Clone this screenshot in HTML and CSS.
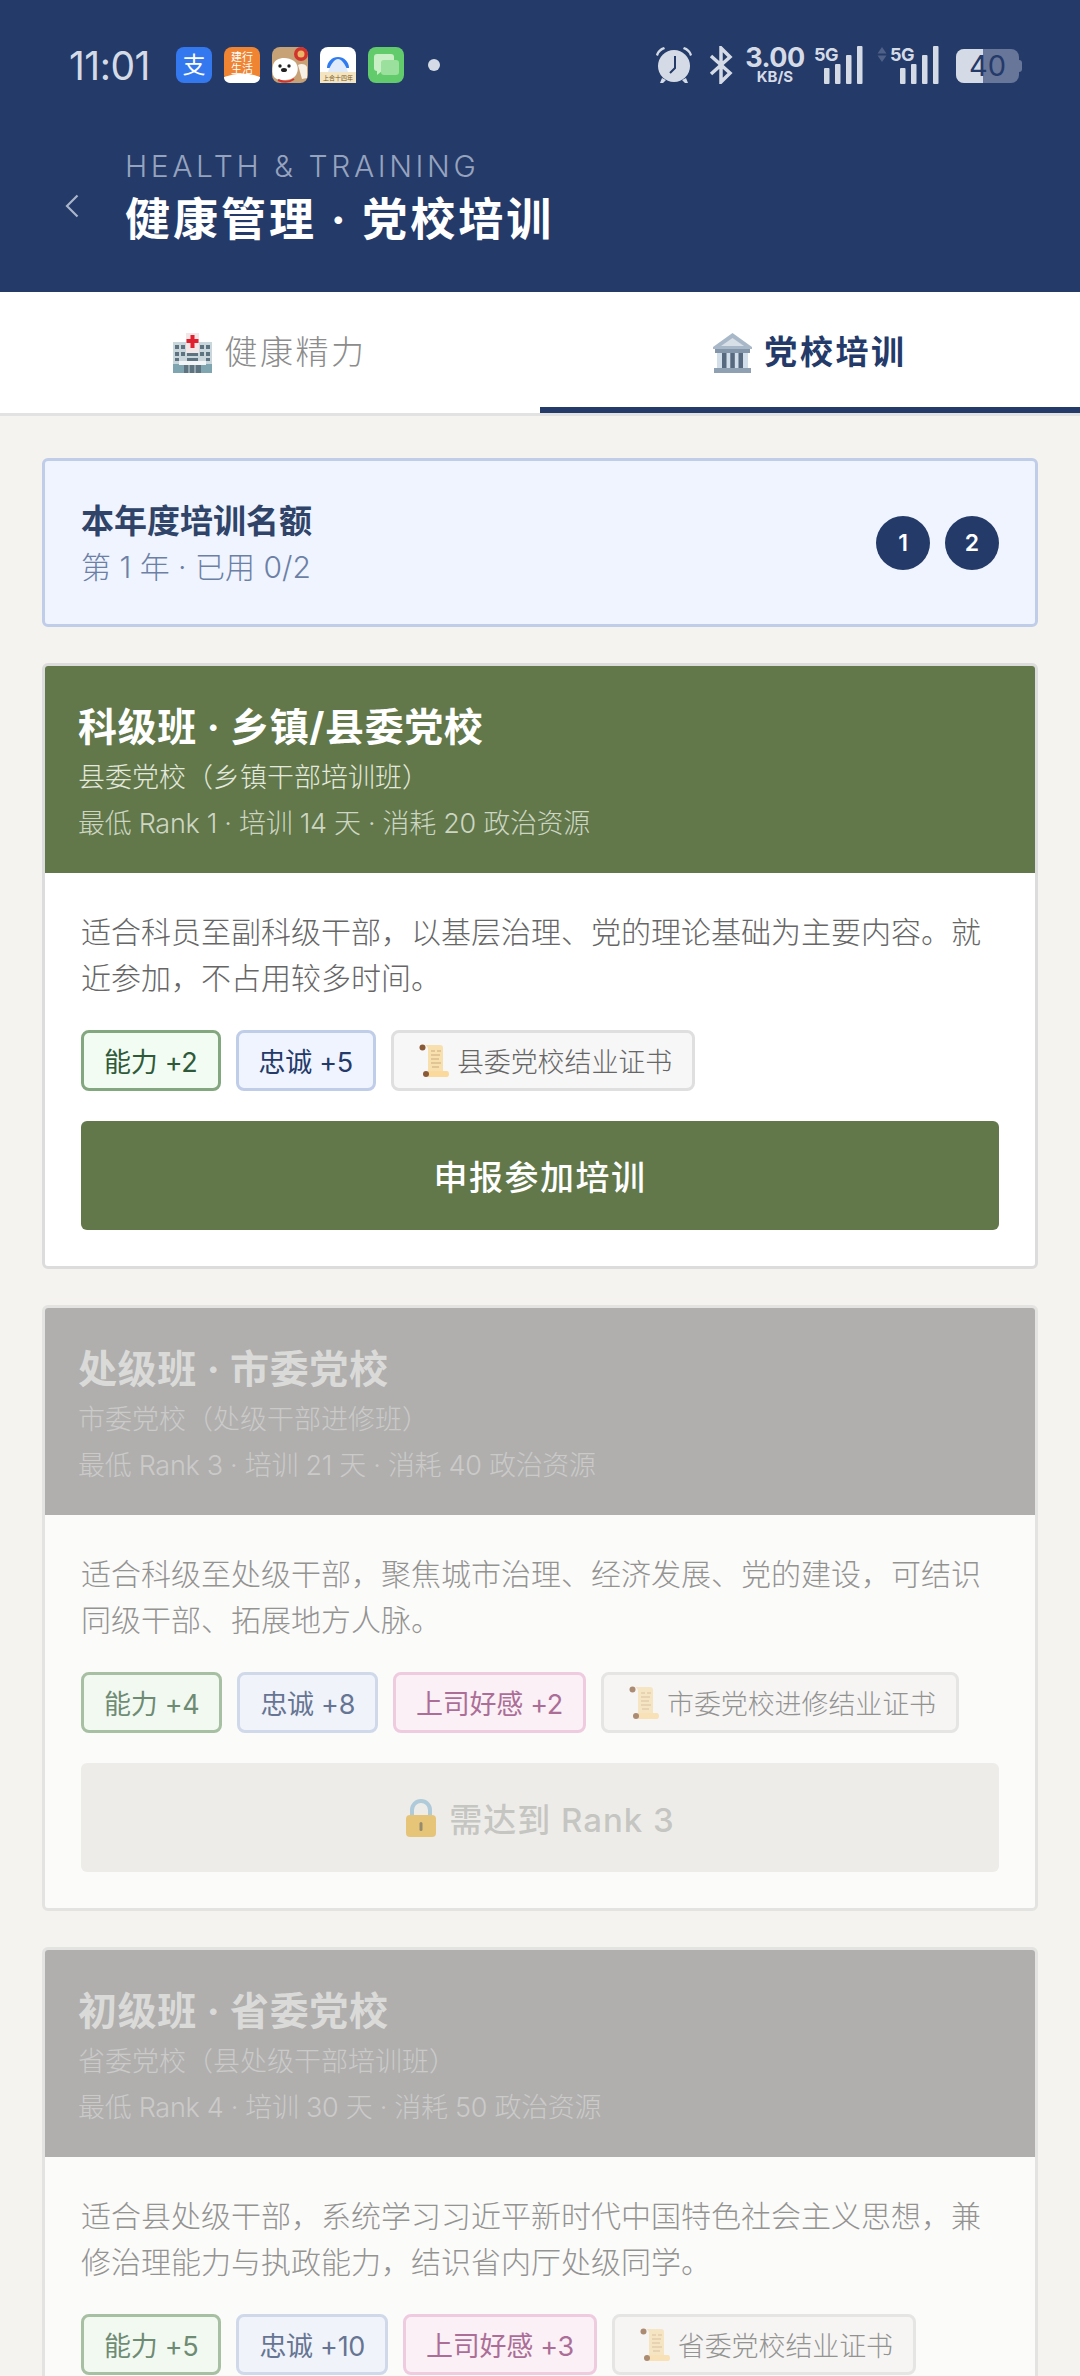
FILE: index.html
```html
<!DOCTYPE html>
<html lang="zh-CN">
<head>
<meta charset="utf-8">
<title>健康管理 · 党校培训</title>
<link rel="stylesheet" href="styles.css">
</head>
<body>
<svg class="defs" width="0" height="0" aria-hidden="true">
  <defs>
    <symbol id="i-scroll" viewBox="0 0 30 34">
      <path d="M5 1h16c2 0 3 1 3 3v23H9V5C9 3 7 1 5 1z" fill="#f8dfae"/>
      <path d="M9 27h19c1 0 2 1 2 3s-1 3-2 3H9z" fill="#fbd99c"/>
      <g stroke="#c9ac7c" stroke-width="1.2">
        <path d="M12 7h4M18 7h4M12 11h9M12 15h8M12 19h10M13 23h7"/>
      </g>
      <circle cx="3.500" cy="3.500" r="3" fill="#8a5a36"/>
      <circle cx="7" cy="30" r="3" fill="#8a5a36"/>
    </symbol>
    <symbol id="i-signal" viewBox="0 0 50 38">
      <rect x="10" y="22" width="5.5" height="16" rx="1" fill="#d5dbe6"/>
      <rect x="21" y="18" width="5.5" height="20" rx="1" fill="#d5dbe6"/>
      <rect x="32" y="9" width="5.5" height="29" rx="1" fill="#d5dbe6"/>
      <rect x="43" y="0" width="5.5" height="38" rx="1" fill="#d5dbe6"/>
    </symbol>
  </defs>
</svg>

<header class="app-header">
  <div class="status">
    <div class="status-left">
      <span class="clock">11:01</span>
      <div class="apps">
        <svg class="app" viewBox="0 0 36 36"><rect width="36" height="36" rx="8" fill="#3478f0"/><text class="app-txt" x="18" y="26" font-size="23">支</text></svg>
        <svg class="app" viewBox="0 0 36 36"><rect width="36" height="36" rx="8" fill="#ef8433"/><path d="M0 30q18-7 36 0c0 4-3 6-8 6H8c-5 0-8-2-8-6z" fill="#fff"/><text class="app-txt" x="18" y="14" font-size="11">建行</text><text class="app-txt" x="18" y="26" font-size="11">生活</text></svg>
        <svg class="app" viewBox="0 0 36 36"><rect width="36" height="36" rx="8" fill="#c8a277"/><circle cx="29" cy="7" r="7" fill="#d2332c"/><circle cx="29" cy="7" r="3.500" fill="#e9b668"/><path d="M1 18c2-8 14-9 21-4 4 3 5 9 2 14-4 6-17 7-22 2-2-3-2-8-1-12z" fill="#fff"/><path d="M26 18c3-2 8-1 9 2v11l-5 1z" fill="#f6f0e6"/><circle cx="8" cy="19" r="1.700" fill="#222"/><circle cx="17" cy="19" r="1.700" fill="#222"/><ellipse cx="12" cy="23" rx="3" ry="2" fill="#222"/><path d="M6 33q9 4 16-1" stroke="#d2332c" stroke-width="2" fill="none"/></svg>
        <svg class="app" viewBox="0 0 36 36"><rect width="36" height="36" rx="8" fill="#fff"/><rect y="25" width="36" height="11" fill="#f3e4c2"/><path d="M7 21a11 11 0 1 1 22 0h-5a6 6 0 0 0-12 0z" fill="#2f7bf0"/><path d="M8 25c3-9 7-13 10-13s7 4 10 13z" fill="#dfeafb"/><text class="app-mini" x="18" y="33" font-size="6">上合十四年</text></svg>
        <svg class="app" viewBox="0 0 36 36"><rect width="36" height="36" rx="8" fill="#62cc6c"/><rect x="6" y="7" width="20" height="17" rx="3" fill="#c9efc6"/><path d="M9 24h5l-5 4z" fill="#c9efc6"/><rect x="13" y="13" width="18" height="15" rx="3" fill="#9be09c"/></svg>
      </div>
      <span class="status-dot"></span>
    </div>
    <div class="status-right">
      <svg class="alarm" viewBox="0 0 38 38"><path d="M1 9c1-4 4-7 8-8l1 2c-3 1-6 3-7 7zM37 9c-1-4-4-7-8-8l-1 2c3 1 6 3 7 7z" fill="#d5dbe6"/><circle cx="19" cy="20" r="16" fill="#d5dbe6"/><path d="M7 32l-2 5h3l3-3zM31 32l2 5h-3l-3-3z" fill="#d5dbe6"/><path d="M20 10v12l-5 5" fill="none" stroke="#243a69" stroke-width="2"/></svg>
      <svg class="bt" viewBox="0 0 24 38"><path d="M2 10l19 17-9 9V2l9 9L2 28" fill="none" stroke="#d5dbe6" stroke-width="3.500"/></svg>
      <div class="speed"><span class="speed-num">3.00</span><span class="speed-unit">KB/S</span></div>
      <div class="net">
        <span class="net-label">5G</span>
        <svg class="signal"><use href="#i-signal"/></svg>
      </div>
      <div class="net net-second">
        <svg class="updown" viewBox="0 0 10 15"><path d="M5 0l4.500 6.500h-9zM5 15L.5 8.500h9z" fill="#4f6187"/></svg>
        <span class="net-label">5G</span>
        <svg class="signal"><use href="#i-signal"/></svg>
      </div>
      <div class="battery"><span class="battery-fill"></span><span class="battery-num">40</span></div>
    </div>
  </div>
  <div class="nav">
    <svg class="back" viewBox="0 0 14 24"><path d="M12.500 1.500L2 12l10.500 10.500" fill="none" stroke="#aab5ca" stroke-width="2.200"/></svg>
    <div class="nav-text">
      <div class="eyebrow">HEALTH &amp; TRAINING</div>
      <h1 class="page-title">健康管理 · 党校培训</h1>
    </div>
  </div>
</header>

<nav class="tabs">
  <div class="tab">
    <svg class="tab-icon" viewBox="0 0 39 40">
      <rect x="0" y="9" width="39" height="31" fill="#c9d6db"/>
      <rect x="13" y="0" width="13" height="20" fill="#f3e6e6"/>
      <path d="M17.500 2h4v4h4v4h-4v5h-4v-5h-4V6h4z" fill="#e0202e"/>
      <g fill="#5d7480">
        <rect x="2" y="12" width="4" height="4"/><rect x="8" y="12" width="4" height="4"/><rect x="27" y="12" width="4" height="4"/><rect x="33" y="12" width="4" height="4"/>
        <rect x="2" y="19" width="4" height="4"/><rect x="8" y="19" width="4" height="4"/><rect x="27" y="19" width="4" height="4"/><rect x="33" y="19" width="4" height="4"/>
        <rect x="14" y="20" width="11" height="3"/><rect x="14" y="25" width="11" height="3"/>
        <rect x="2" y="25" width="4" height="3"/><rect x="33" y="25" width="4" height="3"/>
      </g>
      <rect x="0" y="31" width="39" height="9" fill="#7fa5b0"/>
      <rect x="6" y="28" width="27" height="4" fill="#f2f4f5"/>
      <rect x="11" y="32" width="17" height="8" fill="#5d7480"/>
      <path d="M16 32v8M22 32v8" stroke="#c9d6db" stroke-width="1"/>
    </svg>
    <span class="tab-label">健康精力</span>
  </div>
  <div class="tab tab-active">
    <svg class="tab-icon" viewBox="0 0 39 40">
      <path d="M19.500 0L39 14v2H0v-2z" fill="#a9b8c8"/>
      <path d="M19.500 5L31 13H8z" fill="#d7dfe7"/>
      <rect x="2" y="16" width="35" height="4" fill="#8395a8"/>
      <rect x="4" y="20" width="31" height="15" fill="#d2deea"/>
      <rect x="9" y="20" width="4.500" height="15" fill="#56697e"/>
      <rect x="17.300" y="20" width="4.500" height="15" fill="#56697e"/>
      <rect x="25.500" y="20" width="4.500" height="15" fill="#56697e"/>
      <rect x="1" y="35" width="37" height="5" fill="#8fa0b2"/>
    </svg>
    <span class="tab-label">党校培训</span>
  </div>
</nav>

<main class="content">
  <section class="quota">
    <div class="quota-text">
      <div class="quota-title">本年度培训名额</div>
      <div class="quota-sub">第 1 年 · 已用 0/2</div>
    </div>
    <div class="quota-slots">
      <span class="slot">1</span>
      <span class="slot">2</span>
    </div>
  </section>

  <article class="card">
    <div class="card-head">
      <h2 class="card-title">科级班 · 乡镇/县委党校</h2>
      <div class="card-sub">县委党校（乡镇干部培训班）</div>
      <div class="card-meta">最低 Rank 1 · 培训 14 天 · 消耗 20 政治资源</div>
    </div>
    <div class="card-body">
      <p class="card-desc">适合科员至副科级干部，以基层治理、党的理论基础为主要内容。就近参加，不占用较多时间。</p>
      <div class="tags">
        <span class="tag tag-green">能力 +2</span>
        <span class="tag tag-blue">忠诚 +5</span>
        <span class="tag tag-gray"><svg class="tag-icon"><use href="#i-scroll"/></svg>县委党校结业证书</span>
      </div>
      <button class="action">申报参加培训</button>
    </div>
  </article>

  <article class="card card-locked">
    <div class="card-head">
      <h2 class="card-title">处级班 · 市委党校</h2>
      <div class="card-sub">市委党校（处级干部进修班）</div>
      <div class="card-meta">最低 Rank 3 · 培训 21 天 · 消耗 40 政治资源</div>
    </div>
    <div class="card-body">
      <p class="card-desc">适合科级至处级干部，聚焦城市治理、经济发展、党的建设，可结识同级干部、拓展地方人脉。</p>
      <div class="tags">
        <span class="tag tag-green">能力 +4</span>
        <span class="tag tag-blue">忠诚 +8</span>
        <span class="tag tag-pink">上司好感 +2</span>
        <span class="tag tag-gray"><svg class="tag-icon"><use href="#i-scroll"/></svg>市委党校进修结业证书</span>
      </div>
      <button class="action">
        <svg class="lock" viewBox="0 0 32 38"><path d="M7 20V11a9 9 0 0 1 18 0v9" fill="none" stroke="#8fb8d0" stroke-width="4"/><rect x="1" y="16" width="30" height="22" rx="4" fill="#e0b040"/><rect x="14.500" y="23" width="3" height="9" rx="1.500" fill="#6b5a30"/></svg>需达到 Rank 3
      </button>
    </div>
  </article>

  <article class="card card-locked">
    <div class="card-head">
      <h2 class="card-title">初级班 · 省委党校</h2>
      <div class="card-sub">省委党校（县处级干部培训班）</div>
      <div class="card-meta">最低 Rank 4 · 培训 30 天 · 消耗 50 政治资源</div>
    </div>
    <div class="card-body">
      <p class="card-desc">适合县处级干部，系统学习习近平新时代中国特色社会主义思想，兼修治理能力与执政能力，结识省内厅处级同学。</p>
      <div class="tags">
        <span class="tag tag-green">能力 +5</span>
        <span class="tag tag-blue">忠诚 +10</span>
        <span class="tag tag-pink">上司好感 +3</span>
        <span class="tag tag-gray"><svg class="tag-icon"><use href="#i-scroll"/></svg>省委党校结业证书</span>
      </div>
    </div>
  </article>
</main>
</body>
</html>
```

FILE: styles.css
```css
* { box-sizing: border-box; }
html, body { margin: 0; padding: 0; height: 2376px; overflow: hidden; }
body {
  background: #f4f3ef;
  font-family: Inter, "Noto Sans CJK SC", sans-serif;
  color: #333;
}
.defs { position: absolute; }

/* Header */
.app-header { height: 292px; background: #243a69; display: flex; flex-direction: column; }
.status {
  height: 130px;
  padding: 46px 58px 0 69px;
  display: flex;
  justify-content: space-between;
  align-items: flex-start;
  color: #d5dbe6;
}
.status-left { display: flex; align-items: center; height: 38px; }
.clock { font-size: 39px; font-weight: 400; width: 107px; letter-spacing: -0.5px; }
.apps { display: flex; gap: 12px; }
.app { width: 36px; height: 36px; display: block; }
.app-txt { fill: #fff; text-anchor: middle; font-family: "Noto Sans CJK SC", sans-serif; }
.app-mini { fill: #7a5a20; text-anchor: middle; font-family: "Noto Sans CJK SC", sans-serif; }
.status-dot { width: 12px; height: 12px; border-radius: 50%; background: #d5dbe6; margin-left: 24px; }
.status-right { display: flex; align-items: flex-start; }
.alarm { width: 38px; height: 38px; display: block; }
.bt { width: 24px; height: 38px; margin-left: 16px; display: block; }
.speed { margin-left: 13px; width: 58px; display: flex; flex-direction: column; align-items: center; }
.speed-num { font-size: 27px; font-weight: 700; line-height: 23px; letter-spacing: -0.5px; }
.speed-unit { font-size: 15px; font-weight: 700; line-height: 15px; }
.net { position: relative; width: 50px; height: 38px; margin-left: 10px; }
.net-second { margin-left: 26px; }
.net-label { position: absolute; left: 0; top: 0; font-size: 18px; font-weight: 700; line-height: 17px; letter-spacing: -0.5px; }
.signal { position: absolute; left: 0; top: 0; width: 50px; height: 38px; }
.updown { position: absolute; left: -13px; top: 1px; width: 10px; height: 15px; }
.battery {
  position: relative;
  width: 63px;
  height: 34px;
  margin: 3px 3px 0 16px;
  background: #68769a;
  border-radius: 8px;
  overflow: visible;
  color: #243a69;
}
.battery::after { content: ""; position: absolute; right: -3px; top: 11px; width: 3px; height: 12px; background: #68769a; border-radius: 0 3px 3px 0; }
.battery-fill { position: absolute; left: 0; top: 0; bottom: 0; width: 27px; background: #d5dbe6; border-radius: 8px 0 0 8px; }
.battery-num { position: absolute; left: 13px; top: 0; font-size: 29px; line-height: 34px; font-weight: 400; }

.nav { display: flex; align-items: flex-end; padding: 18px 0 0 65px; }
.back { width: 14px; height: 24px; margin-bottom: 32px; flex: none; }
.nav-text { margin-left: 46px; }
.eyebrow { font-size: 30px; font-weight: 300; letter-spacing: 3.6px; line-height: 36px; color: #96a3be; }
.page-title { margin: 6px 0 0; font-size: 45px; font-weight: 700; letter-spacing: 3px; line-height: 60px; color: #fff; }

/* Tabs */
.tabs { display: flex; height: 124px; background: #fff; border-bottom: 3px solid #e2e2e2; }
.tab { flex: 1; display: flex; align-items: center; justify-content: center; gap: 12px; font-size: 33px; font-weight: 300; letter-spacing: 2.6px; color: #8c8c8c; }
.tab-label { padding-bottom: 6px; }
.tab-active { color: #243a69; font-weight: 700; border-bottom: 6px solid #243a69; padding-top: 6px; }
.tab-icon { width: 39px; height: 40px; flex: none; }

/* Content */
.content { padding: 42px 42px 0; display: flex; flex-direction: column; gap: 36px; }
.quota {
  height: 169px;
  padding: 0 36px;
  background: #eff4fe;
  border: 3px solid #bfcde9;
  border-radius: 6px;
  display: flex;
  align-items: center;
  justify-content: space-between;
}
.quota-title { font-size: 33px; font-weight: 600; line-height: 44px; color: #2f4468; }
.quota-sub { font-size: 30px; font-weight: 300; line-height: 40px; margin-top: 4px; color: #6c80a6; }
.quota-slots { display: flex; gap: 15px; }
.slot { width: 54px; height: 54px; border-radius: 50%; background: #243a69; color: #fff; font-size: 23px; font-weight: 600; display: flex; align-items: center; justify-content: center; }

/* Cards */
.card { flex: none; background: #fff; border: 3px solid #dcdcdc; border-radius: 6px; overflow: hidden; }
.card-head { height: 207px; padding: 34px 36px 0 36px; background: #62784a; color: #fff; }
.card-title { margin: 0 0 0 -3px; font-size: 39px; font-weight: 700; letter-spacing: 0.6px; line-height: 54px; }
.card-sub { margin-left: -3px; font-size: 27px; font-weight: 300; line-height: 40px; margin-top: 4px; color: #e4e9dd; }
.card-meta { margin-left: -3px; font-size: 27px; font-weight: 300; line-height: 40px; margin-top: 6px; letter-spacing: -0.3px; color: #cdd6c3; }
.card-body { padding: 36px 36px 36px; }
.card-desc { margin: 0; font-size: 30px; font-weight: 300; line-height: 46px; color: #666; }
.tags { display: flex; gap: 15px; margin-top: 29px; }
.tag { height: 61px; padding: 0 20px; border: 3px solid; border-radius: 8px; font-size: 27px; letter-spacing: -0.3px; display: flex; align-items: center; white-space: nowrap; }
.tag-green { background: #f2fcf2; border-color: #83a77e; color: #2f5a3a; }
.tag-blue { background: #eff4fe; border-color: #bfcde9; color: #243a69; }
.tag-pink { background: #fdf0fa; border-color: #eeb9da; color: #8b2f6e; }
.tag-gray { background: #f7f7f7; border-color: #dfdfdf; color: #666; padding-left: 25px; letter-spacing: -0.1px; font-weight: 300; }
.tag-icon { width: 30px; height: 34px; margin-right: 8px; flex: none; }
.action {
  display: flex; align-items: center; justify-content: center;
  width: 100%; height: 109px; margin-top: 30px;
  border: 0; border-radius: 6px;
  background: #62784a; color: #fff;
  font-family: inherit; font-size: 34px; font-weight: 500; letter-spacing: 1.5px;
}
.lock { width: 32px; height: 38px; margin-right: 12px; }

/* Locked */
.card-locked { opacity: 0.68; }
.card-locked .card-head { background: #909090; }
.card-locked .card-title { color: #cfcfcf; }
.card-locked .card-sub { color: #b8b8b8; }
.card-locked .card-meta { color: #b8b8b8; }
.card-locked .action { background: #ebeae6; color: #b0b0ae; font-size: 33px; letter-spacing: 1px; }
```
